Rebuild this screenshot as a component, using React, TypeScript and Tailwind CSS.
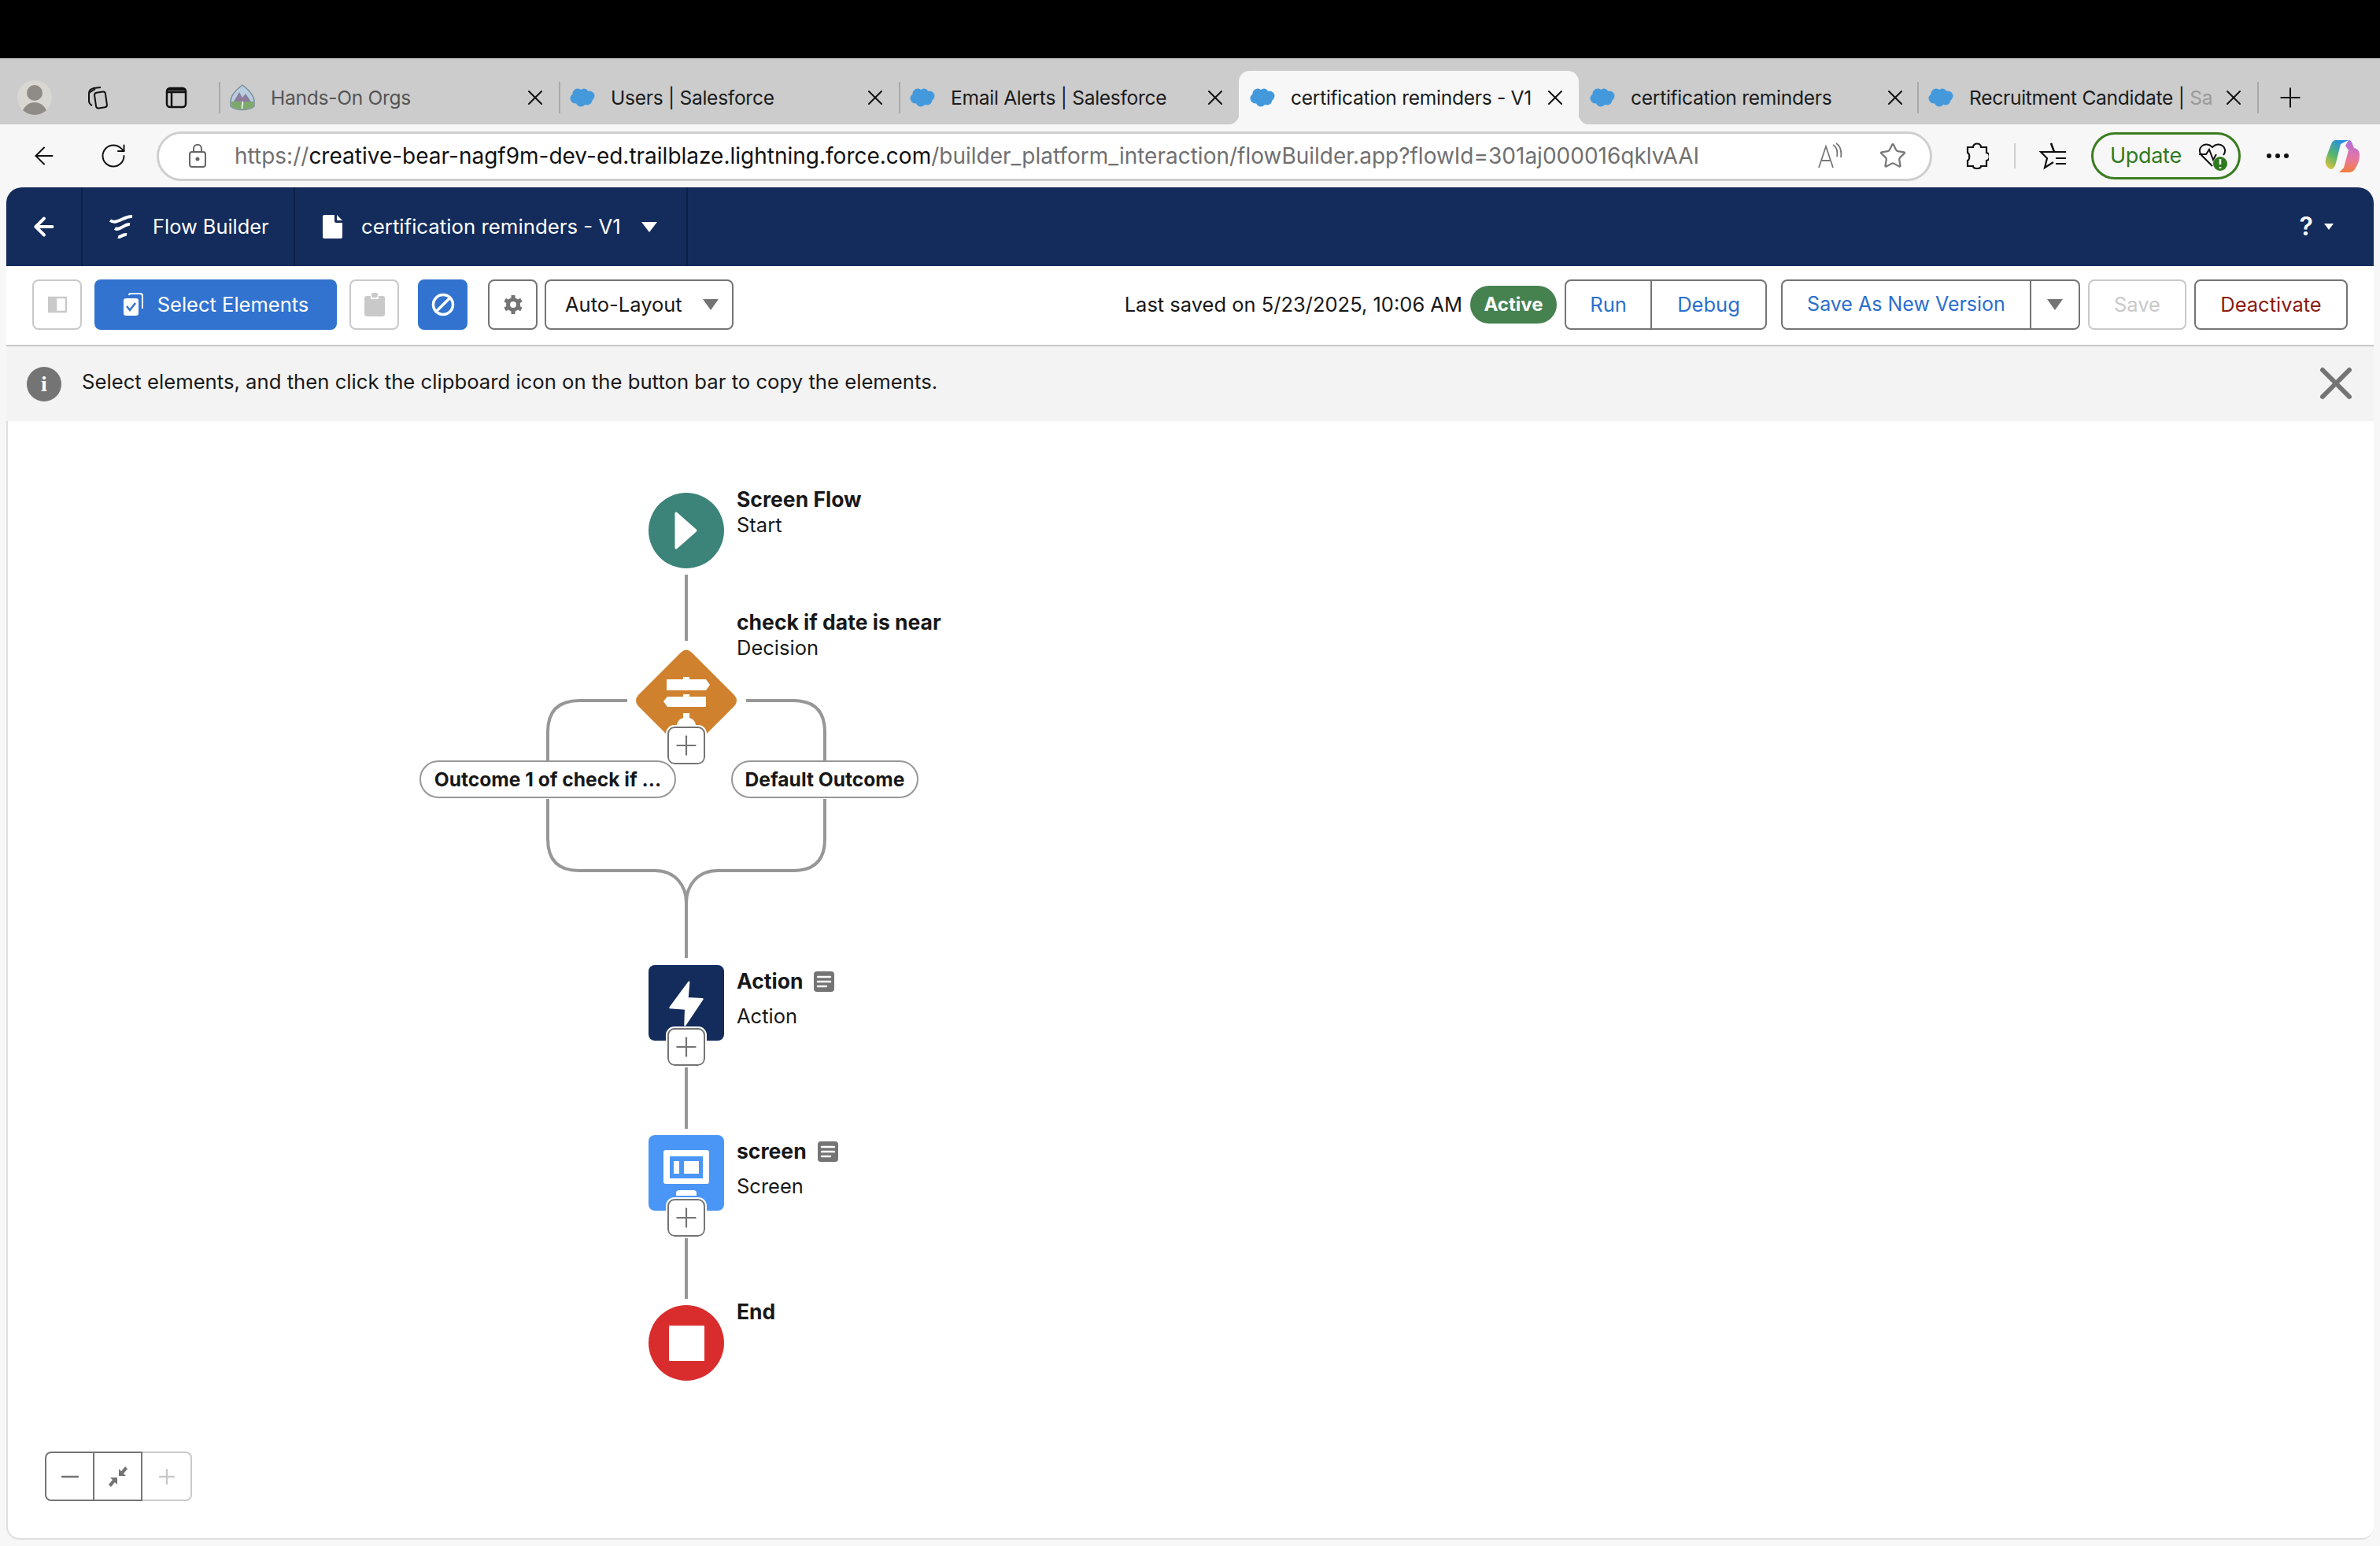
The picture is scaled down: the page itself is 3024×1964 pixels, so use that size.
import React from 'react';
import { ArrowLeft, RotateCw, Star, X, Plus, Minus, Ban } from 'lucide-react';

const Cloud = () => (
  <svg viewBox="0 0 32 24" className="w-[32px] h-[24px] shrink-0" fill="#4499dc">
    <circle cx="10" cy="7" r="6.500" />
    <circle cx="18" cy="6" r="5.500" />
    <circle cx="25" cy="10" r="6.500" />
    <circle cx="7" cy="13" r="6.500" />
    <circle cx="14" cy="17" r="6.500" />
    <circle cx="22" cy="15" r="6.500" />
  </svg>
);

const OrgIcon = () => (
  <svg viewBox="0 0 32 34" className="w-[32px] h-[34px] shrink-0">
    <path d="M16 1 C24 7 31 14 31 22 L31 28 C24 34 8 34 1 28 L1 22 C1 14 8 7 16 1z" fill="#b9cfe0" stroke="#7c8f9e" strokeWidth="1.500" />
    <path d="M5 22 L12 10 L16 17 L20 12 L27 22z" fill="#8d7c9c" />
    <path d="M2 22 H30 V28 C24 33 8 33 2 28z" fill="#7da96b" />
    <path d="M16 22 C18 25 14 27 16 31" stroke="#fff" strokeWidth="1.500" fill="none" />
  </svg>
);

const Tab = ({ title, fade, active, org, noSep, narrow }: { title: string; fade?: string; active?: boolean; org?: boolean; noSep?: boolean; narrow?: boolean }) => (
  <div className={`relative flex items-center h-[68px] shrink-0 ${narrow ? 'w-[430px]' : 'w-[432px]'} ${active ? 'bg-[#f7f7f7] rounded-t-[14px]' : ''}`}>
    {active && <span className="absolute bottom-0 -left-[14px] w-[14px] h-[14px] bg-[radial-gradient(circle_at_0_0,transparent_14px,#f7f7f7_15px)]" />}
    {active && <span className="absolute bottom-0 -right-[14px] w-[14px] h-[14px] bg-[radial-gradient(circle_at_100%_0,transparent_14px,#f7f7f7_15px)]" />}
    <span className={`w-[2px] h-[40px] shrink-0 ${noSep ? '' : 'bg-[#a9a9a9]'}`} />
    <span className="ml-[12px] mr-[20px] flex">{org ? <OrgIcon /> : <Cloud />}</span>
    <span className={`w-[316px] overflow-hidden whitespace-nowrap text-[24.6px] tracking-[-0.3px] ${org ? 'text-[#555555]' : 'text-[#1b1b1b]'}`}>
      {title}{fade && <span className="text-[#9a9a9a]">{fade}</span>}
    </span>
    <X className="ml-[4px] w-[32px] h-[32px] shrink-0 text-[#111111]" strokeWidth={1.500} />
  </div>
);

const TabStrip = () => (
  <div className="flex h-[84px] pt-[16px] bg-[#cccccc] shrink-0">
    <div className="flex items-center w-[278px] pl-[22px] shrink-0">
      <div className="w-[44px] h-[44px] rounded-full bg-[#d9d7d2] overflow-hidden flex flex-col items-center justify-end">
        <span className="w-[20px] h-[20px] rounded-full bg-[#8f8b86] mb-[2px]" />
        <span className="w-[32px] h-[16px] rounded-t-full bg-[#8f8b86]" />
      </div>
      <svg viewBox="0 0 32 32" className="ml-[42px] w-[32px] h-[32px]" fill="none" stroke="#111" strokeWidth="2">
        <rect x="13" y="9" width="14" height="20" rx="3" transform="rotate(-8 20 19)" />
        <path d="M9 26 C5 24 5 22 5 20 V11 C5 7 7 5 11 4 L20 3" />
        <path d="M13 5 L5 10" />
      </svg>
      <svg viewBox="0 0 28 28" className="ml-[70px] w-[28px] h-[28px]" fill="none" stroke="#111" strokeWidth="2.500">
        <rect x="2" y="2" width="24" height="24" rx="4" />
        <path d="M2 7 H26 M3 4 H25 M8 8 V25" />
      </svg>
    </div>
    <Tab title="Hands-On Orgs" org />
    <Tab title="Users | Salesforce" />
    <Tab title="Email Alerts | Salesforce" />
    <Tab title="certification reminders - V1" active noSep />
    <Tab title="certification reminders" noSep narrow />
    <Tab title="Recruitment Candidate | " fade="Sa" />
    <span className="w-[2px] h-[40px] bg-[#a9a9a9] self-center -mt-[1px]" />
    <Plus className="self-center ml-[20px] w-[40px] h-[40px] text-[#111111]" strokeWidth={1.200} />
  </div>
);

const BrowserBar = () => (
  <div className="flex items-center h-[80px] pl-[38px] bg-[#f7f7f7] shrink-0">
    <ArrowLeft className="w-[36px] h-[36px] text-[#111111]" strokeWidth={1.300} />
    <RotateCw className="ml-[52px] w-[36px] h-[36px] text-[#111111]" strokeWidth={1.300} />
    <div className="ml-[37px] flex items-center w-[2256px] h-[63px] rounded-full bg-white border-[3px] border-[#cfcfcf] pl-[37px]">
      <svg viewBox="0 0 24 32" className="w-[24px] h-[32px]" fill="none" stroke="#666" strokeWidth="2">
        <rect x="2" y="11" width="20" height="19" rx="3" />
        <path d="M7 11 V7 C7 0 17 0 17 7 V11" />
        <circle cx="12" cy="20" r="1.500" fill="#666" />
      </svg>
      <div className="ml-[35px] w-[1900px] text-[28px] whitespace-nowrap text-[#707070]">
        https://<span className="text-[#111111]">creative-bear-nagf9m-dev-ed.trailblaze.lightning.force.com</span>/builder_platform_interaction/flowBuilder.app?flowId=301aj000016qklvAAI
      </div>
      <svg viewBox="0 0 32 34" className="ml-[111px] w-[32px] h-[34px]" fill="none" stroke="#777" strokeWidth="1.800">
        <path d="M2 32 L11 5 L20 32 M6 23 H16" />
        <path d="M20 3 C25 6 26 12 25 18 M24 1 C30 5 31 12 30 19" />
      </svg>
      <Star className="ml-[46px] w-[36px] h-[36px] text-[#777777]" strokeWidth={1.500} />
    </div>
    <svg viewBox="0 0 30 34" className="ml-[42px] w-[30px] h-[34px]" fill="none" stroke="#111" strokeWidth="2.200">
      <path d="M10 6 C10 0 20 0 20 6 H27 V13 C32 14 32 22 27 23 V30 H20 C20 34 10 34 10 30 H3 V23 C6 22 6 14 3 13 V6z" />
    </svg>
    <span className="ml-[32px] w-[2px] h-[32px] bg-[#cfcfcf]" />
    <svg viewBox="0 0 36 36" className="ml-[30px] w-[36px] h-[36px]" fill="none" stroke="#111" strokeWidth="2.200">
      <path d="M15 2 L19 13 H2 L10 21 L7 33 L18 26" />
      <path d="M15 2 L19 13 H34 M21 21 H34 M21 28 H34" />
    </svg>
    <div className="ml-[30px] flex items-center w-[190px] h-[60px] rounded-full border-[3px] border-[#3a7d22] pl-[21px]">
      <span className="text-[27px] text-[#2f7a1f] tracking-[-0.3px]">Update</span>
      <svg viewBox="0 0 38 38" className="ml-[20px] w-[38px] h-[38px]" fill="none">
        <path d="M19 32 L5 18 C-2 9 10 -1 19 8 C28 -1 40 9 33 18" stroke="#111" strokeWidth="2" />
        <path d="M2 17 H11 L15 11 L20 24 L24 17" stroke="#111" strokeWidth="2" />
        <circle cx="29" cy="29" r="9" fill="#2f7a1f" />
        <path d="M29 23 V30 M29 33 V35" stroke="#fff" strokeWidth="2.500" />
      </svg>
    </div>
    <div className="ml-[33px] flex gap-[5px]">
      <span className="w-[6px] h-[6px] rounded-full bg-[#111111]" />
      <span className="w-[6px] h-[6px] rounded-full bg-[#111111]" />
      <span className="w-[6px] h-[6px] rounded-full bg-[#111111]" />
    </div>
    <svg viewBox="0 0 44 42" className="ml-[46px] w-[44px] h-[42px]">
      <defs>
        <linearGradient id="cpA" x1="0" y1="1" x2="0.600" y2="0">
          <stop offset="0" stopColor="#f3c53b" />
          <stop offset="0.500" stopColor="#58b66a" />
          <stop offset="1" stopColor="#2a8fe0" />
        </linearGradient>
        <linearGradient id="cpB" x1="0.500" y1="0" x2="0.500" y2="1">
          <stop offset="0" stopColor="#b06fe0" />
          <stop offset="0.600" stopColor="#e8779b" />
          <stop offset="1" stopColor="#f0803c" />
        </linearGradient>
      </defs>
      <path d="M14 1 H30 L20 6 L14 30 C12 38 8 40 4 36 C0 32 0 28 2 22 L8 6 C9 3 11 1 14 1z" fill="url(#cpA)" />
      <path d="M30 1 C33 1 34 3 35 6 L37 11 C42 12 44 15 44 20 C44 26 42 32 38 38 C36 41 33 42 30 42 H18 L24 36 L30 14 L26 8z" fill="url(#cpB)" />
    </svg>
  </div>
);

const AppHeader = () => (
  <div className="flex items-stretch h-[100px] rounded-t-[20px] bg-[#132c5c] text-white text-[26px] shrink-0">
    <div className="flex items-center justify-center w-[97px] border-r-2 border-[#0c1f47]">
      <ArrowLeft className="w-[36px] h-[36px]" strokeWidth={2.600} />
    </div>
    <div className="flex items-center w-[270px] pl-[33px] border-r-2 border-[#0c1f47]">
      <svg viewBox="0 0 32 32" className="w-[32px] h-[32px]" fill="none" stroke="#fff" strokeWidth="4">
        <path d="M2 8 C10 14 20 2 30 3 M8 18 C14 22 20 12 27 13 M12 29 C15 30 18 25 23 26" />
      </svg>
      <span className="ml-[24px] whitespace-nowrap text-[25.4px]">Flow Builder</span>
    </div>
    <div className="flex items-center w-[499px] pl-[35px] border-r-2 border-[#0c1f47]">
      <svg viewBox="0 0 25 30" className="w-[25px] h-[30px]" fill="#fff">
        <path d="M2 0 H15 V8 C15 9 16 10 17 10 H25 V28 C25 29 24 30 23 30 H2 C1 30 0 29 0 28 V2 C0 1 1 0 2 0z M18 0 L25 7 H18z" />
      </svg>
      <span className="ml-[24px] whitespace-nowrap text-[25.8px]">certification reminders - V1</span>
      <span className="ml-[26px] w-0 h-0 border-x-[10px] border-x-transparent border-t-[13px] border-t-white" />
    </div>
    <div className="ml-auto flex items-center pr-[51px]">
      <span className="text-[32px] font-semibold">?</span>
      <span className="ml-[14px] w-0 h-0 border-x-[6px] border-x-transparent border-t-[8px] border-t-white" />
    </div>
  </div>
);

const IconBtn = ({ children, className }: { children: React.ReactNode; className: string }) => (
  <div className={`flex items-center justify-center w-[63px] h-[64px] rounded-[8px] border-2 ${className}`}>{children}</div>
);

const Caret = () => (
  <span className="w-0 h-0 border-x-[10px] border-x-transparent border-t-[14px] border-t-[#747474]" />
);

const Gear = () => (
  <svg viewBox="0 0 24 26" className="w-[24px] h-[26px]" fill="none" stroke="#747474">
    <circle cx="12" cy="13" r="6.500" strokeWidth="5" />
    <path d="M12 1 V6 M12 20 V25 M1.600 7 L6 9.500 M18 16.500 L22.400 19 M1.600 19 L6 16.500 M18 9.500 L22.400 7" strokeWidth="5" />
  </svg>
);

const ActionBar = () => (
  <div className="flex items-center h-[102px] pb-[2px] pl-[33px] pr-[33px] bg-white border-b-2 border-[#c9c9c9] text-[25.5px] shrink-0">
    <IconBtn className="border-[#c9c9c9]">
      <svg viewBox="0 0 24 24" className="w-[24px] h-[24px]" fill="none" stroke="#c9c9c9" strokeWidth="2.500">
        <rect x="1" y="3" width="22" height="18" />
        <rect x="2" y="4" width="8" height="16" fill="#c9c9c9" />
      </svg>
    </IconBtn>
    <div className="ml-[16px] flex items-center justify-center gap-[18px] w-[308px] h-[64px] rounded-[8px] bg-[#3273cf] text-white">
      <svg viewBox="0 0 26 30" className="w-[26px] h-[30px]">
        <path d="M8 3 C8 2 9 1 10 1 H22 C24 1 25 2 25 4 V20" fill="none" stroke="#fff" strokeWidth="2" />
        <rect x="1" y="7" width="19" height="22" rx="3" fill="#fff" />
        <path d="M5 17 L9 22 L16 13" fill="none" stroke="#3273cf" strokeWidth="2.500" />
      </svg>
      <span>Select Elements</span>
    </div>
    <IconBtn className="ml-[16px] border-[#c9c9c9]">
      <svg viewBox="0 0 26 30" className="w-[26px] h-[30px]" fill="#c9c9c9">
        <path d="M3 4 H8 V8 H18 V4 H23 C25 4 26 5 26 7 V27 C26 29 25 30 23 30 H3 C1 30 0 29 0 27 V7 C0 5 1 4 3 4z" />
        <rect x="9" y="0" width="8" height="6" rx="2" />
      </svg>
    </IconBtn>
    <IconBtn className="ml-[24px] bg-[#3273cf] border-[#3273cf]">
      <Ban className="w-[30px] h-[30px] text-white -scale-x-100" strokeWidth={2.800} />
    </IconBtn>
    <IconBtn className="ml-[26px] border-[#747474]">
      <Gear />
    </IconBtn>
    <div className="ml-[9px] flex items-center justify-between w-[240px] h-[64px] pl-[24px] pr-[17px] rounded-[8px] border-2 border-[#747474] text-[#181818]">
      <span>Auto-Layout</span>
      <Caret />
    </div>

    <div className="ml-auto text-[#181818] whitespace-nowrap">Last saved on 5/23/2025, 10:06 AM</div>
    <div className="ml-[10px] flex items-center justify-center w-[110px] h-[48px] rounded-full bg-[#45824f] text-white font-bold text-[24px]">Active</div>
    <div className="ml-[10px] flex h-[64px] rounded-[8px] border-2 border-[#747474] text-[#2b6fcd]">
      <div className="flex items-center justify-center w-[109px] border-r-2 border-[#747474]">Run</div>
      <div className="flex items-center justify-center w-[144px]">Debug</div>
    </div>
    <div className="ml-[18px] flex h-[64px] rounded-[8px] border-2 border-[#747474]">
      <div className="flex items-center justify-center w-[316px] border-r-2 border-[#747474] text-[#2b6fcd] text-[25px]">Save As New Version</div>
      <div className="flex items-center justify-center w-[60px]"><Caret /></div>
    </div>
    <div className="ml-[10px] flex items-center justify-center w-[125px] h-[64px] rounded-[8px] border-2 border-[#c9c9c9] text-[#c9c9c9]">Save</div>
    <div className="ml-[10px] flex items-center justify-center w-[195px] h-[64px] rounded-[8px] border-2 border-[#747474] text-[#8a1a14]">Deactivate</div>
  </div>
);

const Notice = () => (
  <div className="flex items-center h-[95px] pl-[26px] pr-[14px] bg-[#f3f3f3] text-[25.7px] text-[#181818] shrink-0">
    <div className="flex items-center justify-center w-[44px] h-[44px] rounded-full bg-[#747474]">
      <span className="text-white font-bold text-[28px] font-['Liberation_Serif',serif]">i</span>
    </div>
    <span className="ml-[26px] -mt-[4px]">Select elements, and then click the clipboard icon on the button bar to copy the elements.</span>
    <X className="ml-auto -mt-[2px] w-[68px] h-[68px] text-[#747474]" strokeWidth={2.100} />
  </div>
);

const AddBtn = ({ className }: { className: string }) => (
  <div className={`absolute flex items-center justify-center w-[48px] h-[48px] rounded-[9px] bg-white border-2 border-[#747474] outline-2 outline-white ${className}`}>
    <Plus className="w-[40px] h-[40px] text-[#747474]" strokeWidth={1.300} />
  </div>
);

const NodeLabel = ({ className, title, sub, note }: { className: string; title: string; sub?: string; note?: boolean }) => (
  <div className={`absolute left-[928px] text-[#181818] whitespace-nowrap ${className}`}>
    <div className="flex items-center h-[32px]">
      <span className="font-bold text-[26.5px]">{title}</span>
      {note && (
        <svg viewBox="0 0 26 26" className="ml-[14px] w-[26px] h-[26px]">
          <rect width="26" height="26" rx="4" fill="#747474" />
          <path d="M5 7 H21 M5 13 H21 M5 19 H16" stroke="#fff" strokeWidth="2.500" strokeLinecap="round" />
        </svg>
      )}
    </div>
    {sub && <div className={`text-[25.5px] leading-[32px] ${note ? 'mt-[12px]' : ''}`}>{sub}</div>}
  </div>
);

const Pill = ({ className, text }: { className: string; text: string }) => (
  <div className={`absolute flex items-center justify-center h-[48px] top-[431px] rounded-full bg-white border-2 border-[#979797] text-[24.6px] font-bold text-[#181818] whitespace-nowrap ${className}`}>{text}</div>
);

// canvas coordinates: page x - 8, page y - 535
const FlowCanvas = () => (
  <div className="relative flex-1 bg-white rounded-b-[16px] border-b-2 border-[#e0e0e0] shadow-[inset_2px_0_0_#e0e0e0]">
    <svg className="absolute left-0 top-0 w-[1300px] h-[1300px]" viewBox="0 0 1300 1300" fill="none" stroke="#979797" strokeWidth="4">
      <path d="M864 195 V279" />
      <path d="M789 355 H728 Q688 355 688 395 V432" />
      <path d="M940 355 H1000 Q1040 355 1040 395 V432" />
      <path d="M688 480 V531 Q688 571 728 571 H824 C850 571 864 590 864 612" />
      <path d="M1040 480 V531 Q1040 571 1000 571 H904 C878 571 864 590 864 612" />
      <path d="M864 612 V682" />
      <path d="M864 821 V899" />
      <path d="M864 1037 V1115" />
    </svg>

    <div className="absolute left-[816px] top-[91px] flex items-center justify-center w-[96px] h-[96px] rounded-full bg-[#3c8379]">
      <svg viewBox="0 0 30 50" className="w-[30px] h-[50px]">
        <path d="M2 3 L27 25 L2 47z" fill="#fff" stroke="#fff" strokeWidth="3" strokeLinejoin="round" />
      </svg>
    </div>
    <NodeLabel className="top-[84px]" title="Screen Flow" sub="Start" />

    <svg viewBox="0 0 130 130" className="absolute left-[799px] top-[290px] w-[130px] h-[130px]">
      <path d="M58 4 Q65 -3 72 4 L126 58 Q132 65 126 72 L72 126 Q65 132 58 126 L4 72 Q-2 65 4 58z" fill="#cf812e" />
      <path d="M61 35 H69 V38 H90 L95 45 L90 52 H40 V38 H61z" fill="#fff" />
      <path d="M61 57 H69 V60 H90 V73 H41 L36 66 L41 60 H61z" fill="#fff" />
      <path d="M61 81 H69 V87 Q76 89 77 96 H53 Q54 89 61 87z" fill="#fff" />
    </svg>
    <NodeLabel className="top-[240px]" title="check if date is near" sub="Decision" />
    <AddBtn className="left-[840px] top-[388px]" />
    <Pill className="left-[525px] w-[326px]" text="Outcome 1 of check if ..." />
    <Pill className="left-[921px] w-[238px]" text="Default Outcome" />

    <div className="absolute left-[816px] top-[691px] flex justify-center pt-[20px] w-[96px] h-[96px] rounded-[8px] bg-[#132c5c]">
      <svg viewBox="0 0 130 150" preserveAspectRatio="none" className="w-[44px] h-[58px]">
        <path d="M75 4 L4 88 L62 92 L60 146 L126 60 L70 57z" fill="#fff" stroke="#fff" strokeWidth="6" strokeLinejoin="round" />
      </svg>
    </div>
    <AddBtn className="left-[840px] top-[771px]" />
    <NodeLabel className="top-[696px]" title="Action" sub="Action" note />

    <div className="absolute left-[816px] top-[907px] flex flex-col items-center pt-[19px] w-[96px] h-[96px] rounded-[8px] bg-[#4a96f7]">
      <div className="flex items-center justify-center w-[58px] h-[43px] rounded-[3px] bg-white">
        <div className="flex items-center justify-center gap-[6px] w-[42px] h-[28px] bg-[#4a96f7]">
          <span className="w-[7px] h-[16px] bg-white" />
          <span className="w-[19px] h-[16px] bg-white" />
        </div>
      </div>
      <span className="mt-[8px] w-[26px] h-[7px] rounded-t-[4px] bg-white" />
    </div>
    <AddBtn className="left-[840px] top-[988px]" />
    <NodeLabel className="top-[912px]" title="screen" sub="Screen" note />

    <div className="absolute left-[816px] top-[1123px] flex items-center justify-center w-[96px] h-[96px] rounded-full bg-[#d92d2d]">
      <span className="w-[45px] h-[45px] bg-white" />
    </div>
    <NodeLabel className="top-[1116px]" title="End" />

    <div className="absolute left-[49px] bottom-[47px] flex h-[63px] text-[#747474]">
      <div className="flex items-center justify-center w-[63px] rounded-l-[8px] border-2 border-[#747474]">
        <Minus className="w-[34px] h-[34px]" strokeWidth={1.800} />
      </div>
      <div className="flex items-center justify-center w-[61px] border-y-2 border-r-2 border-[#747474]">
        <svg viewBox="0 0 26 26" className="w-[26px] h-[26px]" fill="#747474">
          <path d="M25 3 L22 0 L17 6 L14 3 V12 H23 L20 9z M1 23 L4 26 L9 20 L12 23 V14 H3 L6 17z" />
        </svg>
      </div>
      <div className="flex items-center justify-center w-[63px] rounded-r-[8px] border-y-2 border-r-2 border-[#c9c9c9]">
        <Plus className="w-[30px] h-[30px] text-[#c9c9c9]" strokeWidth={2} />
      </div>
    </div>
  </div>
);

export default function App() {
  return (
    <div className="flex flex-col w-[3024px] h-[1964px] bg-[#f7f7f7] font-[Inter,sans-serif] overflow-hidden">
      <div className="h-[74px] bg-black shrink-0" />
      <TabStrip />
      <BrowserBar />
      <div className="flex flex-col flex-1 mx-[8px] mb-[8px] min-h-0">
        <AppHeader />
        <ActionBar />
        <Notice />
        <FlowCanvas />
      </div>
    </div>
  );
}
